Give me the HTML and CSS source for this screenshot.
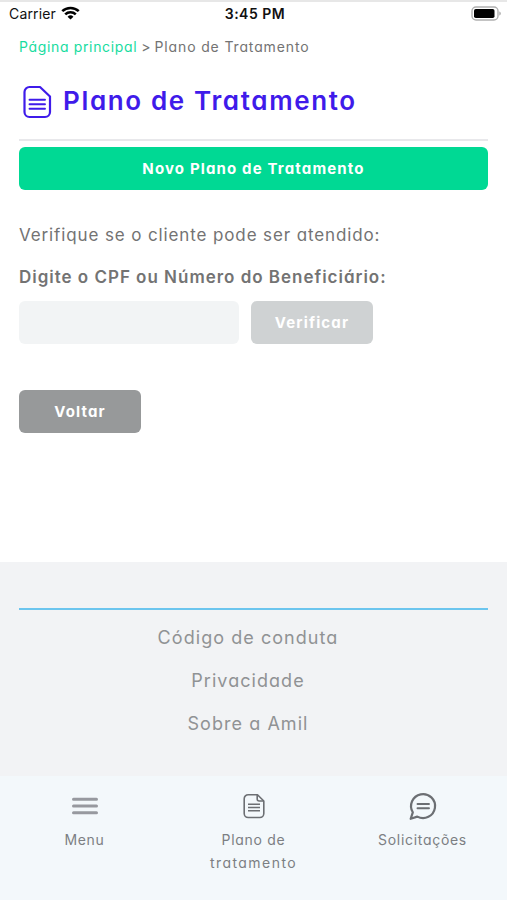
FILE: index.html
```html
<!DOCTYPE html>
<html lang="pt-BR">
  <head>
    <meta charset="UTF-8" />
    <meta name="viewport" content="width=device-width, initial-scale=1.0" />
    <title>Plano de Tratamento</title>
    <link rel="stylesheet" href="styles.css">
  </head>
  <body>
    <header class="status-bar">
      <div class="carrier">
        <span>Carrier</span>
        <svg viewBox="0 0 18 14" width="19" height="14" preserveAspectRatio="none">
          <path d="M9 13.5 6.2 10.7a4 4 0 0 1 5.6 0z" fill="#000" />
          <path d="M1.2 5.2a11 11 0 0 1 15.6 0M4 8.3a7 7 0 0 1 10 0" fill="none" stroke="#000" stroke-width="2.4" />
        </svg>
      </div>
      <div class="time">3:45 PM</div>
      <div class="battery">
        <svg viewBox="0 0 31 15" width="31" height="15">
          <rect x="2" y="1" width="26" height="13" rx="4" fill="#fff" stroke="#b0b0b0" stroke-width="1.4" />
          <rect x="4" y="3" width="20.5" height="9" rx="1.8" fill="#000" />
          <path d="M29.3 5.5v4c2-.8 2-3.2 0-4z" fill="#a8a8a8" />
        </svg>
      </div>
    </header>

    <main class="content">
      <nav class="breadcrumb">
        <a href="#" class="breadcrumb-link">Página principal</a>
        <span class="separator">&gt;</span>
        <span class="current">Plano de Tratamento</span>
      </nav>

      <div class="page-heading">
        <svg class="heading-icon" viewBox="0 0 30 34" width="30" height="34">
          <path d="M7.5 2H18l10 9.500V27a5 5 0 0 1-5 5H7.500a5 5 0 0 1-5-5V7a5 5 0 0 1 5-5z" fill="none" stroke="#3f1bea" stroke-width="2.2" stroke-linejoin="round" />
          <path d="M7.500 14.700h15.500M7.500 19.200h15.500M7.500 23.700h15.500" stroke="#3f1bea" stroke-width="1.9" stroke-linecap="round" />
        </svg>
        <h1 class="page-title">Plano de Tratamento</h1>
      </div>

      <button type="button" class="btn btn-new">Novo Plano de Tratamento</button>

      <p class="intro">Verifique se o cliente pode ser atendido:</p>
      <form class="verify-form">
        <label for="beneficiary">Digite o CPF ou Número do Beneficiário:</label>
        <div class="form-row">
          <input type="text" id="beneficiary" />
          <button type="submit" class="btn btn-verify" disabled>Verificar</button>
        </div>
      </form>
      <button type="button" class="btn btn-back">Voltar</button>
    </main>

    <footer class="footer">
      <ul class="footer-links">
        <li><a href="#">Código de conduta</a></li>
        <li><a href="#">Privacidade</a></li>
        <li><a href="#">Sobre a Amil</a></li>
      </ul>
    </footer>

    <nav class="tab-bar">
      <a href="#" class="tab">
        <svg viewBox="0 0 30 30" width="30" height="30">
          <path d="M3.5 8.300h23M3.5 15h23M3.5 21.700h23" stroke="#97999f" stroke-width="3" stroke-linecap="round" />
        </svg>
        <span>Menu</span>
      </a>
      <a href="#" class="tab">
        <svg viewBox="0 0 30 30" width="30" height="30" fill="none" stroke="#6c6f73" stroke-width="1.6" stroke-linejoin="round">
          <path d="M9.200 3.700h9.300l6.300 6.300v12.500a4 4 0 0 1-4 4H9.200a4 4 0 0 1-4-4V7.700a4 4 0 0 1 4-4z" />
          <path d="M18.200 3.700v4.300a2 2 0 0 0 2 2h4.600M9 13.200h12M9 16.500h12M9 19.800h12" />
        </svg>
        <span>Plano de<br /><span class="tab-second-line">tratamento</span></span>
      </a>
      <a href="#" class="tab">
        <svg viewBox="0 0 30 30" width="30" height="30" fill="none" stroke="#6c6f73" stroke-width="2.2" stroke-linejoin="round">
          <path d="M4.800 21.300A12 12 0 1 1 9.300 25.600L2.700 27.800z" />
          <path d="M9.500 13h11.500M9.500 17.200h11.500" stroke-width="1.9" stroke-linecap="round" />
        </svg>
        <span>Solicitações</span>
      </a>
    </nav>
  </body>
</html>
```
FILE: styles.css
```css
:root {
  --primary-color: #00d994;
  --title-color: #3f1bea;
  --text-color: #737373;
  --muted-color: #909294;
  --input-background: #f2f4f5;
}

* {
  margin: 0;
  padding: 0;
  box-sizing: border-box;
}

body {
  min-height: 900px;
  display: flex;
  flex-direction: column;
  background: #fff;
  color: var(--text-color);
  font-family: "Inter", sans-serif;
  font-feature-settings: "cv11";
}

a {
  color: inherit;
  text-decoration: none;
}

.status-bar {
  height: 28px;
  padding: 0 6px 3px 9px;
  border-top: 2px solid #e7e7e7;
  display: grid;
  grid-template-columns: 1fr auto 1fr;
  align-items: center;
  color: #111;
  font-size: 14px;
  letter-spacing: 0.15px;
  font-feature-settings: normal;
}

.carrier {
  display: flex;
  align-items: center;
  gap: 5px;
}

.carrier svg {
  margin-bottom: 2px;
}

.time {
  font-weight: 600;
  letter-spacing: 0.5px;
}

.battery {
  display: flex;
  justify-content: flex-end;
  padding-bottom: 1px;
}

.content {
  height: 534px;
  padding: 8px 19px 0;
}

.breadcrumb {
  height: 20px;
  display: flex;
  align-items: center;
  gap: 4px;
  font-size: 14px;
}

.breadcrumb-link {
  color: #18dc9f;
  letter-spacing: 0.65px;
}

.current {
  letter-spacing: 0.86px;
}

.page-heading {
  height: 85px;
  padding-top: 9px;
  margin-bottom: 6px;
  border-bottom: 2px solid #e8e8eb;
  display: flex;
  align-items: center;
  gap: 11px;
}

.heading-icon {
  margin-left: 3px;
}

.page-title {
  padding-bottom: 3px;
  color: var(--title-color);
  font-size: 26px;
  font-weight: 600;
  letter-spacing: 1.65px;
}

.btn {
  height: 43px;
  border: none;
  border-radius: 6px;
  color: #fff;
  font: inherit;
  font-size: 15px;
  font-weight: 700;
  letter-spacing: 1.15px;
}

.btn-new {
  display: block;
  width: 100%;
  background: var(--primary-color);
}

.intro {
  margin-top: 33px;
  font-size: 17px;
  line-height: 24px;
  letter-spacing: 0.88px;
}

.verify-form label {
  display: block;
  margin-top: 18px;
  font-size: 17px;
  font-weight: 600;
  line-height: 24px;
  letter-spacing: 0.98px;
}

.form-row {
  display: flex;
  gap: 12px;
  margin: 12px 0 46px;
}

.form-row input {
  width: 220px;
  height: 43px;
  padding: 0 12px;
  border: none;
  border-radius: 6px;
  background: var(--input-background);
}

.btn-verify {
  width: 122px;
  background: #cfd2d3;
}

.btn-back {
  width: 122px;
  background: #97999a;
}

.footer {
  height: 214px;
  padding: 46px 19px 0;
  background: #f2f3f5;
}

.footer-links {
  padding: 6px 11px 0 0;
  border-top: 2px solid #6cc5ee;
  list-style: none;
  text-align: center;
  color: var(--muted-color);
  font-size: 18px;
  line-height: 43px;
  letter-spacing: 1.05px;
}

.tab-bar {
  flex: 1;
  padding-top: 15px;
  display: grid;
  grid-template-columns: repeat(3, 1fr);
  background: #f3f8fb;
  color: #7c7f83;
}

.tab {
  display: flex;
  flex-direction: column;
  align-items: center;
  gap: 7px;
  font-size: 14px;
  line-height: 23px;
  letter-spacing: 0.7px;
  text-align: center;
}

.tab-second-line {
  letter-spacing: 1.45px;
}
```
